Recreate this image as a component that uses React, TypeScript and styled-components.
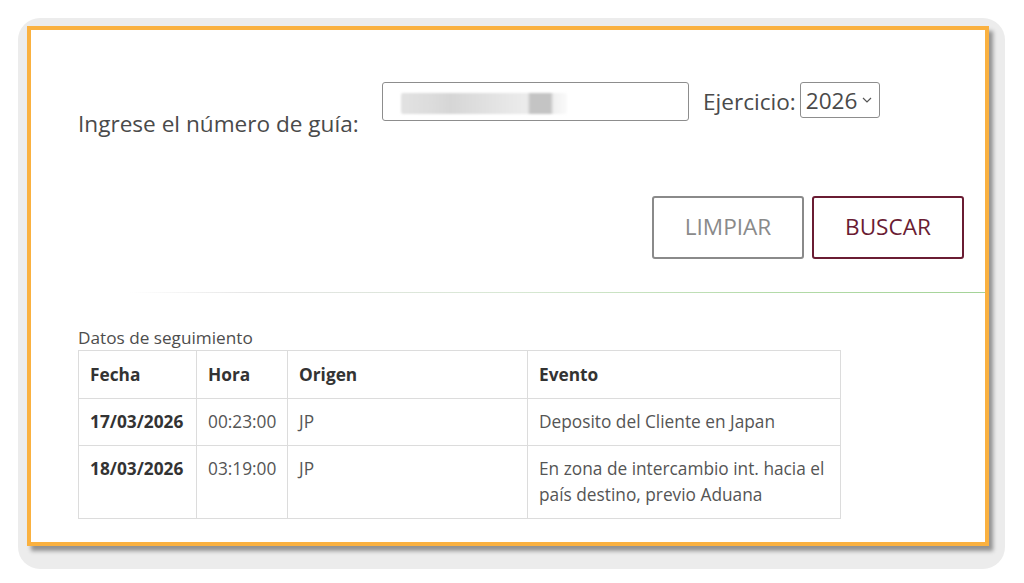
import React from "react";
import styled, { createGlobalStyle } from "styled-components";

const GlobalStyle = createGlobalStyle`
  html, body { margin: 0; padding: 0; background: #ffffff; }
  body { font-family: "Open Sans", "Noto Sans", Arial, sans-serif; color: #4d4d4d; }
  * { box-sizing: border-box; }
`;

const Backdrop = styled.div`
  margin: 18px 0 0 18px;
  width: 987px;
  height: 551px;
  background: #ececec;
  border-radius: 22px;
  padding: 8px 0 0 9px;
`;

const Card = styled.div`
  width: 962px;
  height: 520px;
  border: 4px solid #fab140;
  background: #ffffff;
  box-shadow: 4px 5px 4px rgba(0, 0, 0, 0.38);
  padding: 52px 0 0 47px;
  display: flex;
  flex-direction: column;
`;

const FormRow = styled.div`
  display: flex;
  align-items: flex-start;
`;

const Label = styled.label`
  width: 304px;
  margin-top: 27px;
  font-size: 22.6px;
  line-height: 30px;
  color: #4a4a4a;
`;

const TextBox = styled.div`
  width: 307px;
  height: 39px;
  border: 1px solid #8d8d8d;
  border-radius: 3px;
  padding: 10px 0 0 18px;
`;

const Redacted = styled.div`
  width: 166px;
  height: 21px;
  filter: blur(1.2px);
  background: linear-gradient(
    to right,
    #e2e2e2 0%,
    #dcdcdc 18%,
    #d6d6d6 30%,
    #e0e0e0 50%,
    #e6e6e6 62%,
    #ececec 76%,
    #c4c4c4 78%,
    #c4c4c4 90%,
    #f0f0f0 92%,
    #fafafa 100%
  );
  border-radius: 2px;
`;

const YearLabel = styled.span`
  margin: 5px 0 0 14px;
  font-size: 22.6px;
  line-height: 30px;
  color: #4a4a4a;
`;

const Select = styled.div`
  margin-left: 4px;
  width: 80px;
  height: 36px;
  border: 1px solid #8d8d8d;
  border-radius: 3px;
  display: flex;
  align-items: center;
  padding: 0 0 0 5px;
  gap: 5px;
  font-size: 22.6px;
  color: #4a4a4a;
`;

const ButtonRow = styled.div`
  display: flex;
  justify-content: flex-end;
  gap: 8px;
  margin-top: 57px;
  padding-right: 21px;
`;

const Button = styled.button<{ $tone: "neutral" | "primary" }>`
  width: 152px;
  height: 63px;
  background: #ffffff;
  border: 2px solid ${(p) => (p.$tone === "primary" ? "#6a1c33" : "#8a8a8a")};
  color: ${(p) => (p.$tone === "primary" ? "#6a1c33" : "#8a8a8a")};
  border-radius: 3px;
  font-family: "Open Sans", "Noto Sans", Arial, sans-serif;
  font-size: 22.6px;
  padding: 0 0 2px;
  cursor: pointer;
`;

const Divider = styled.div`
  margin: 33px 0 0 52px;
  height: 1px;
  background: linear-gradient(
    to right,
    rgba(220, 220, 220, 0) 0%,
    #e4e4e4 15%,
    #d8e8d4 45%,
    #b4dba9 75%,
    #a4d397 100%
  );
`;

const Caption = styled.div`
  margin-top: 34px;
  font-size: 17.2px;
  line-height: 22px;
  color: #4d4d4d;
`;

const Table = styled.table`
  margin-top: 1px;
  width: 762px;
  border-collapse: collapse;
  table-layout: fixed;
  font-size: 17.3px;
  line-height: 26px;
`;

const Th = styled.th`
  border: 1px solid #dcdcdc;
  padding: 11px 11px 10px;
  text-align: left;
  vertical-align: top;
  font-weight: 700;
  color: #333333;
`;

const Td = styled.td<{ $strong?: boolean }>`
  border: 1px solid #dcdcdc;
  padding: 10px 11px;
  text-align: left;
  vertical-align: top;
  font-weight: ${(p) => (p.$strong ? 700 : 400)};
  color: ${(p) => (p.$strong ? "#333333" : "#555555")};
`;

const Chevron = () => (
  <svg width="10" height="6" viewBox="0 0 10 6" fill="none">
    <path d="M1 1l4 4 4-4" stroke="#555" strokeWidth="1.2" />
  </svg>
);

const rows = [
  { fecha: "17/03/2026", hora: "00:23:00", origen: "JP", evento: "Deposito del Cliente en Japan" },
  {
    fecha: "18/03/2026",
    hora: "03:19:00",
    origen: "JP",
    evento: "En zona de intercambio int. hacia el país destino, previo Aduana",
  },
];

export default function App() {
  return (
    <>
      <GlobalStyle />
      <Backdrop>
        <Card>
          <FormRow>
            <Label>Ingrese el número de guía:</Label>
            <TextBox>
              <Redacted />
            </TextBox>
            <YearLabel>Ejercicio:</YearLabel>
            <Select>
              2026
              <Chevron />
            </Select>
          </FormRow>
          <ButtonRow>
            <Button $tone="neutral">LIMPIAR</Button>
            <Button $tone="primary">BUSCAR</Button>
          </ButtonRow>
          <Divider />
          <Caption>Datos de seguimiento</Caption>
          <Table>
            <colgroup>
              <col style={{ width: 118 }} />
              <col style={{ width: 91 }} />
              <col style={{ width: 240 }} />
              <col style={{ width: 313 }} />
            </colgroup>
            <thead>
              <tr>
                <Th>Fecha</Th>
                <Th>Hora</Th>
                <Th>Origen</Th>
                <Th>Evento</Th>
              </tr>
            </thead>
            <tbody>
              {rows.map((r) => (
                <tr key={r.fecha}>
                  <Td $strong>{r.fecha}</Td>
                  <Td>{r.hora}</Td>
                  <Td>{r.origen}</Td>
                  <Td>{r.evento}</Td>
                </tr>
              ))}
            </tbody>
          </Table>
        </Card>
      </Backdrop>
    </>
  );
}
